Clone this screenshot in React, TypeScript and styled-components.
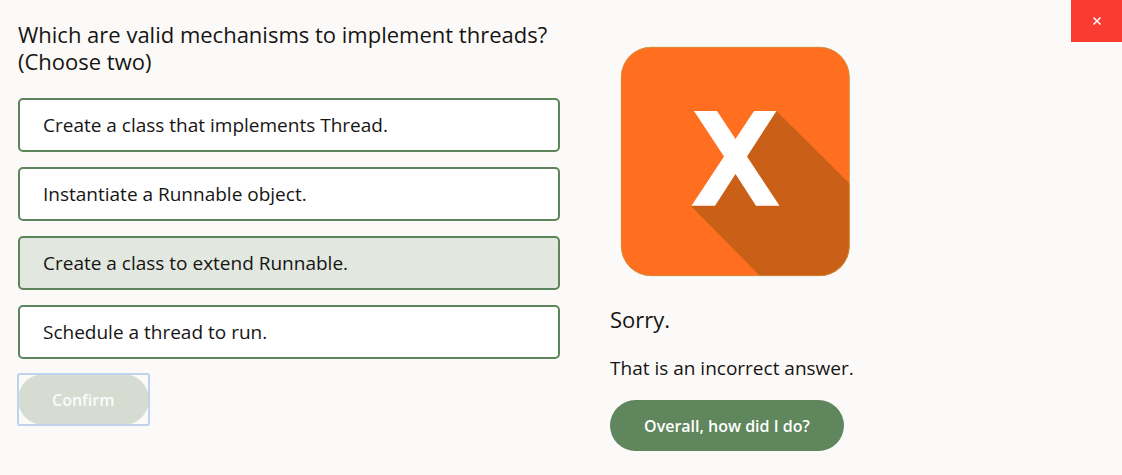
import React, { useState } from "react";
import styled, { createGlobalStyle, css } from "styled-components";

const GlobalStyle = createGlobalStyle`
  *, *::before, *::after { box-sizing: border-box; }
  body {
    margin: 0;
    background: #fcfaf8;
    color: #161513;
    font-family: "Open Sans", "Noto Sans", sans-serif;
  }
`;

const Page = styled.main`
  position: relative;
  display: grid;
  grid-template-columns: 18fr 17fr;
  column-gap: 50px;
  align-items: start;
  padding: 21px 0 24px 18px;
`;

const Quiz = styled.form`
  display: flex;
  flex-direction: column;
  align-items: flex-start;
  gap: 15px;
`;

const Choices = styled.fieldset`
  display: flex;
  flex-direction: column;
  gap: 15px;
  width: 100%;
  min-width: 0;
  margin: 0;
  padding: 0;
  border: 0;
`;

const Question = styled.legend`
  margin: 0 0 23px;
  padding: 0;
  font-size: 22px;
  line-height: 27px;
`;

const Option = styled.label<{ $selected: boolean }>`
  position: relative;
  display: flex;
  align-items: center;
  min-height: 54px;
  padding: 8px 23px;
  border: 2px solid #5d855c;
  border-radius: 5px;
  background: ${(p) => (p.$selected ? "#e2e7e0" : "#ffffff")};
  font-size: 19px;
  line-height: 27px;
  cursor: pointer;
`;

const OptionInput = styled.input`
  position: absolute;
  inset: 0;
  width: 100%;
  height: 100%;
  margin: 0;
  opacity: 0;
  cursor: pointer;
`;

const PillButton = styled.button<{ $muted?: boolean }>`
  height: 51px;
  padding: 0 34px;
  border: 0;
  border-radius: 26px;
  background: #5f865d;
  color: #ffffff;
  font-family: inherit;
  font-size: 16px;
  font-weight: 600;
  line-height: 24px;
  cursor: pointer;
  ${(p) =>
    p.$muted &&
    css`
      position: relative;
      background: #d6dcd2;
      color: #fcfbfa;

      &::after {
        content: "";
        position: absolute;
        inset: -1px;
        border: 2px solid #bfd3ee;
        border-radius: 3px;
      }
    `}
`;

const Feedback = styled.section`
  display: flex;
  flex-direction: column;
  align-items: flex-start;
  padding-top: 15px;
`;

const Badge = styled.svg`
  display: block;
  width: 250px;
  height: 250px;
`;

const Verdict = styled.h2`
  margin: 20px 0 0;
  font-size: 22px;
  font-weight: 400;
  line-height: 27px;
`;

const Message = styled.p`
  margin: 22px 0 18px;
  font-size: 19px;
  line-height: 27px;
`;

const CloseButton = styled.button`
  position: absolute;
  top: 0;
  right: 0;
  display: grid;
  place-items: center;
  width: 51px;
  height: 42px;
  padding: 0;
  border: 0;
  background: #f93b32;
  color: #ffffff;
  cursor: pointer;
`;

const options = [
  "Create a class that implements Thread.",
  "Instantiate a Runnable object.",
  "Create a class to extend Runnable.",
  "Schedule a thread to run.",
];

function IncorrectBadge() {
  return (
    <Badge viewBox="0 0 250 250" role="img" aria-label="Incorrect">
      <defs>
        <clipPath id="badge-shape">
          <rect x="11" y="11" width="228.5" height="229" rx="30" />
        </clipPath>
      </defs>
      <rect x="11" y="11" width="228.5" height="229" rx="30" fill="#ff6f1f" />
      <g clipPath="url(#badge-shape)">
        <path d="M166.5 75 L250 158 V250 H160 L149 239 L81.500 170.500 L125 122Z" fill="#ca5f18" />
      </g>
      <rect x="11.300" y="11.300" width="228" height="228.400" rx="30" fill="none" stroke="#c99545" strokeWidth="0.8" />
      <path
        d="M84 75 H107 L125.500 103 L144 75 H166.500 L137 120.500 L169.500 169.700 H146 L125.500 138 L105 169.700 H81.500 L114 120.500Z"
        fill="#ffffff"
      />
    </Badge>
  );
}

export default function App() {
  const [selected, setSelected] = useState<number[]>([2]);

  const toggle = (index: number) =>
    setSelected((current) =>
      current.includes(index) ? current.filter((i) => i !== index) : [...current, index]
    );

  return (
    <>
      <GlobalStyle />
      <Page>
        <Quiz onSubmit={(event) => event.preventDefault()}>
          <Choices>
            <Question>
              Which are valid mechanisms to implement threads?
              <br />
              (Choose two)
            </Question>
            {options.map((text, index) => (
              <Option key={text} $selected={selected.includes(index)}>
                <OptionInput
                  type="checkbox"
                  checked={selected.includes(index)}
                  onChange={() => toggle(index)}
                />
                {text}
              </Option>
            ))}
          </Choices>
          <PillButton type="submit" $muted>
            Confirm
          </PillButton>
        </Quiz>
        <Feedback>
          <IncorrectBadge />
          <Verdict>Sorry.</Verdict>
          <Message>That is an incorrect answer.</Message>
          <PillButton type="button">Overall, how did I do?</PillButton>
        </Feedback>
        <CloseButton type="button" aria-label="Close">
          <svg width="10" height="10" viewBox="0 0 10 10" aria-hidden="true">
            <path d="M1.500 1.500 L8.500 8.500 M8.500 1.500 L1.500 8.500" stroke="currentColor" strokeWidth="1.500" />
          </svg>
        </CloseButton>
      </Page>
    </>
  );
}
